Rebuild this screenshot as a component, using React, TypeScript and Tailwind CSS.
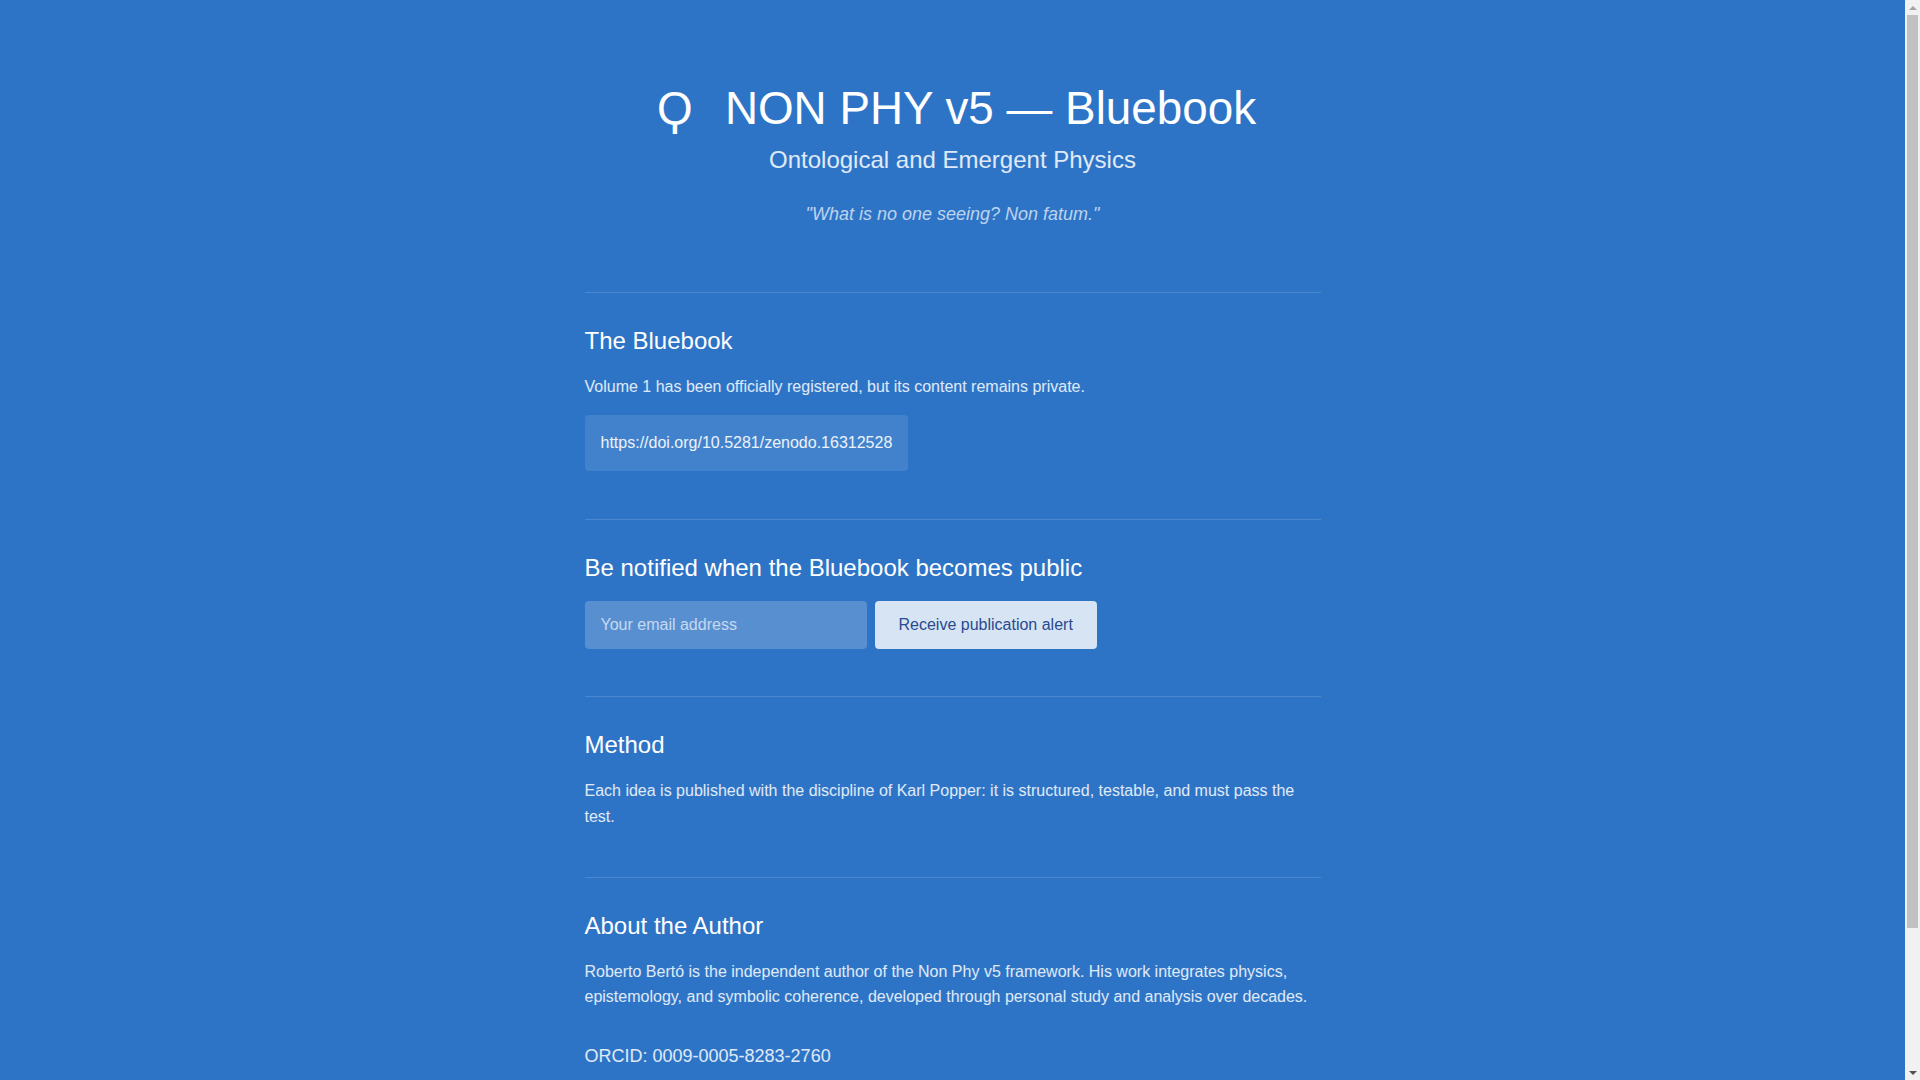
import React from "react";

const sans = "font-['Liberation_Sans',Arial,sans-serif]";

function Section({ title, children, last }: { title: string; children: React.ReactNode; last?: boolean }) {
  return (
    <section className={`border-t border-white/15 pt-[34px] ${last ? "pb-[172px]" : "pb-[47.5px]"}`}>
      <h2 className="text-[24px] leading-[28px] font-normal text-white mb-[19px]">{title}</h2>
      {children}
    </section>
  );
}

// the browser's scrollbar, as it shows in the screenshot
function Scrollbar() {
  return (
    <aside className="flex w-[15px] shrink-0 flex-col items-center bg-[#f1f1f1]">
      <div className="flex h-[15px] w-full items-center justify-center">
        <div className="h-0 w-0 border-x-[4px] border-b-[4px] border-x-transparent border-b-[#a3a3a3]" />
      </div>
      <div className="h-[913px] w-[11px] bg-[#c1c1c1]" />
      <div className="flex-1" />
      <div className="flex h-[15px] w-full items-center justify-center">
        <div className="h-0 w-0 border-x-[4px] border-t-[4px] border-x-transparent border-t-[#505050]" />
      </div>
    </aside>
  );
}

export default function App() {
  return (
    <div className={`flex h-screen overflow-hidden bg-[#2d74c6] text-white ${sans}`}>
      <div className="flex-1 overflow-hidden">
        <main className="mx-auto w-[736px]">
          <header className="text-center pt-[83px] pb-[67px]">
            <h1 className="text-[45.8px] leading-[52px] font-normal">
              <span className="inline-block w-[52px] mr-[24px] text-center">Ϙ</span>
              NON PHY v5 — Bluebook
            </h1>
            <p className="mt-[11px] text-[24px] leading-[27.6px] text-white/85">Ontological and Emergent Physics</p>
            <p className="mt-[30px] text-[18px] leading-[21px] italic text-white/70">"What is no one seeing? Non fatum."</p>
          </header>

          <Section title="The Bluebook">
            <p className="text-[16px] leading-[25.6px] text-white/85">
              Volume 1 has been officially registered, but its content remains private.
            </p>
            <div className="mt-4">
              <a className="inline-block rounded bg-white/10 p-4 text-[16px] leading-6 text-white/90">
                https://doi.org/10.5281/zenodo.16312528
              </a>
            </div>
          </Section>

          <Section title="Be notified when the Bluebook becomes public">
            <form className="flex gap-2" onSubmit={(e) => e.preventDefault()}>
              <input
                type="email"
                placeholder="Your email address"
                className="h-12 w-[282px] rounded bg-white/20 px-4 text-[16px] text-white placeholder:text-white/65 outline-none"
              />
              <button type="submit" className="h-12 rounded bg-[#d6e4f4] px-6 text-[16px] text-[#2a4a8f]">
                Receive publication alert
              </button>
            </form>
          </Section>

          <Section title="Method">
            <p className="text-[16px] leading-[25.6px] text-white/85">
              Each idea is published with the discipline of Karl Popper: it is structured, testable, and must pass the test.
            </p>
          </Section>

          <Section title="About the Author" last>
            <p className="text-[16px] leading-[25.6px] text-white/85">
              Roberto Bertó is the independent author of the Non Phy v5 framework. His work integrates physics,
              epistemology, and symbolic coherence, developed through personal study and analysis over decades.
            </p>
            <p className="mt-8 text-[18px] leading-[28.8px] text-white/85">ORCID: 0009-0005-8283-2760</p>
          </Section>
        </main>
      </div>
      <Scrollbar />
    </div>
  );
}
